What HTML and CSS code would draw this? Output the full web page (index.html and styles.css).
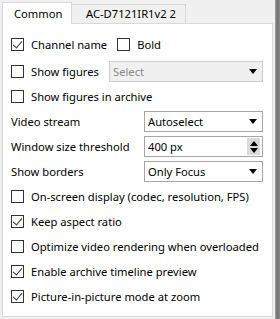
FILE: index.html
```html
<!DOCTYPE html>
<html lang="en">
<head>
    <meta charset="UTF-8">
    <title>Channel settings</title>
    <link rel="stylesheet" href="styles.css">
</head>
<body>
    <div class="window">
        <div class="dialog">
            <div class="tabs">
                <div class="tab active">Common</div>
                <div class="tab">AC-D7121IR1v2 2</div>
            </div>
            <div class="panel">
                <div class="row first">
                    <label class="check"><span class="box checked"></span>Channel name</label>
                    <label class="check bold-opt"><span class="box"></span>Bold</label>
                </div>
                <div class="row">
                    <label class="check"><span class="box"></span>Show figures</label>
                    <div class="select disabled wide">Select<span class="arrow"></span></div>
                </div>
                <div class="row">
                    <label class="check"><span class="box"></span>Show figures in archive</label>
                </div>
                <div class="row">
                    <span class="label">Video stream</span>
                    <div class="select">Autoselect<span class="arrow"></span></div>
                </div>
                <div class="row">
                    <span class="label">Window size threshold</span>
                    <div class="select">400 px<span class="spin"><i class="up"></i><i class="down"></i></span></div>
                </div>
                <div class="row">
                    <span class="label">Show borders</span>
                    <div class="select">Only Focus<span class="arrow"></span></div>
                </div>
                <div class="row">
                    <label class="check"><span class="box"></span>On-screen display (codec, resolution, FPS)</label>
                </div>
                <div class="row">
                    <label class="check"><span class="box checked"></span>Keep aspect ratio</label>
                </div>
                <div class="row">
                    <label class="check"><span class="box"></span>Optimize video rendering when overloaded</label>
                </div>
                <div class="row">
                    <label class="check"><span class="box checked"></span>Enable archive timeline preview</label>
                </div>
                <div class="row">
                    <label class="check"><span class="box checked"></span>Picture-in-picture mode at zoom</label>
                </div>
            </div>
        </div>
        <div class="edge"></div>
    </div>
</body>
</html>
```

FILE: styles.css
```css
body {
    margin: 0;
    background-color: #f0f0f0;
    font-family: 'Noto Sans', 'Open Sans', sans-serif;
    font-size: 11.2px;
    color: #000;
}
.window {
    display: flex;
    height: 319px;
}
.dialog {
    width: 271px;
    padding: 1px 2px 2px 2px;
    display: flex;
    flex-direction: column;
}
.edge {
    width: 5px;
    background: linear-gradient(to right, #a8a8a8, #707070 40%, #8a8a8a);
}
.tabs {
    display: flex;
    align-items: flex-end;
    height: 22px;
}
.tab {
    height: 19px;
    line-height: 18px;
    padding: 0 9px 0 14px;
    background-color: #f0f0f0;
    border: 1px solid #d9d9d9;
    border-bottom: none;
    border-left: none;
    box-sizing: border-box;
}
.tab.active {
    height: 22px;
    line-height: 22px;
    width: 70px;
    padding: 0 0 0 11px;
    background-color: #fff;
    border-left: 1px solid #d9d9d9;
    margin-bottom: -1px;
    position: relative;
    z-index: 1;
}
.panel {
    flex: 1;
    background: #fff;
    border: 1px solid #d9d9d9;
    padding: 8px 9px 0 7px;
    display: flex;
    flex-direction: column;
}
.row {
    display: flex;
    align-items: center;
    justify-content: space-between;
    height: 25px;
}
.row.first {
    margin-bottom: 2px;
    justify-content: flex-start;
}
.check {
    display: flex;
    align-items: center;
    white-space: nowrap;
}
.bold-opt {
    margin-left: 9px;
}
.label {
    padding-left: 1px;
}
.box {
    width: 13px;
    height: 13px;
    box-sizing: border-box;
    border: 1px solid #333;
    background: #fff;
    margin: 0 7px 0 1px;
    position: relative;
}
.box.checked::after {
    content: "";
    position: absolute;
    left: 3px;
    top: 0px;
    width: 4px;
    height: 8px;
    border: solid #333;
    border-width: 0 1px 1px 0;
    transform: rotate(40deg);
}
.select {
    width: 119px;
    height: 21px;
    box-sizing: border-box;
    border: 1px solid #a6a6a6;
    background: #fff;
    padding-left: 3px;
    display: flex;
    align-items: center;
    justify-content: space-between;
}
.select.wide {
    width: 154px;
}
.select.disabled {
    background: #f0f0f0;
    border-color: #cfcfcf;
    color: #8a8a8a;
}
.arrow {
    width: 0;
    height: 0;
    border-left: 4px solid transparent;
    border-right: 4px solid transparent;
    border-top: 5px solid #000;
    margin-right: 5px;
}
.spin {
    width: 13px;
    height: 17px;
    background: #dadada;
    margin-right: 2px;
    display: flex;
    flex-direction: column;
    align-items: center;
    justify-content: center;
    gap: 2px;
}
.spin i {
    width: 0;
    height: 0;
    border-left: 4px solid transparent;
    border-right: 4px solid transparent;
}
.spin .up {
    border-bottom: 5px solid #000;
}
.spin .down {
    border-top: 5px solid #000;
}
```
